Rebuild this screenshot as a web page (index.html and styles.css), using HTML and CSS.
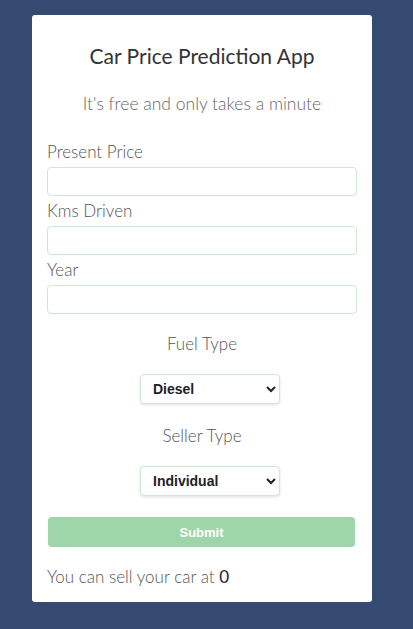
FILE: index.html
```html
<!DOCTYPE html>
<html>
<head>
<meta charset="utf-8">
<link rel="stylesheet" href="styles.css">
</head>
<body>
<div class="card">
  <h1 class="title">Car Price Prediction App</h1>
  <p class="subtitle">It's free and only takes a minute</p>
  <form class="form">
    <label class="label">Present Price</label>
    <input class="field" type="text">
    <label class="label">Kms Driven</label>
    <input class="field" type="text">
    <label class="label">Year</label>
    <input class="field" type="text">
    <div class="center-label fuel">Fuel Type</div>
    <div class="sel-wrap">
      <select class="sel"><option>Diesel</option><option>Petrol</option><option>CNG</option></select>
    </div>
    <div class="center-label seller">Seller Type</div>
    <div class="sel-wrap">
      <select class="sel"><option>Individual</option><option>Dealer</option></select>
    </div>
    <button class="submit" type="button">Submit</button>
  </form>
  <p class="result">You can sell your car at <b class="num">0</b></p>
</div>
</body>
</html>
```
FILE: styles.css
```css
* { box-sizing: border-box; }
html, body { margin: 0; padding: 0; }
body {
  background: #344a71;
  font-family: "Lato", "Open Sans", sans-serif;
  height: 629px;
  overflow: hidden;
}
.card {
  background: #fff;
  width: 340px;
  margin: 15px 0 0 32px;
  border-radius: 3px;
  padding: 27px 15px 15px 15px;
  height: 587px;
}
.title {
  margin: 0;
  text-align: center;
  font-weight: 400;
  font-size: 21px;
  line-height: 28px;
  color: #333;
}
.subtitle {
  margin: 22px 0 0;
  text-align: center;
  font-size: 17.5px;
  line-height: 24px;
  color: #666;
  font-weight: 300;
}
.form { display: flex; flex-direction: column; margin-top: 25px; }
.label {
  font-size: 17px;
  line-height: 22px;
  color: #555;
  font-weight: 300;
  margin-bottom: 4px;
}
.field {
  height: 29px;
  width: 310px;
  border: 1px solid #cfe8d2;
  border-radius: 4px;
  margin: 0 0 4px;
  background: #fff;
}
.center-label {
  text-align: center;
  font-size: 17px;
  line-height: 22px;
  color: #555;
  font-weight: 300;
}
.fuel { margin-top: 15px; }
.seller { margin-top: 21px; }
.sel-wrap { display: flex; justify-content: center; margin-top: 19px; padding-left: 16px; }
.sel {
  width: 140px;
  height: 30px;
  border: 1px solid #cfe8d2;
  border-radius: 4px;
  box-shadow: 0 1px 3px rgba(0,0,0,0.12);
  font-family: "Liberation Sans", Arial, sans-serif;
  font-weight: 700;
  font-size: 14px;
  color: #222;
  padding: 0 8px;
  background: #fff;
}
.submit {
  margin: 21px 0 0 1px;
  width: 307px;
  height: 30px;
  background: #9fd6a9;
  border: none;
  border-radius: 4px;
  color: #fff;
  font-family: "Liberation Sans", Arial, sans-serif;
  font-weight: 700;
  font-size: 13px;
}
.result {
  margin: 18px 0 0;
  font-size: 17px;
  line-height: 24px;
  color: #555;
  font-weight: 300;
}
.num { color: #222; font-weight: 400; }
```
